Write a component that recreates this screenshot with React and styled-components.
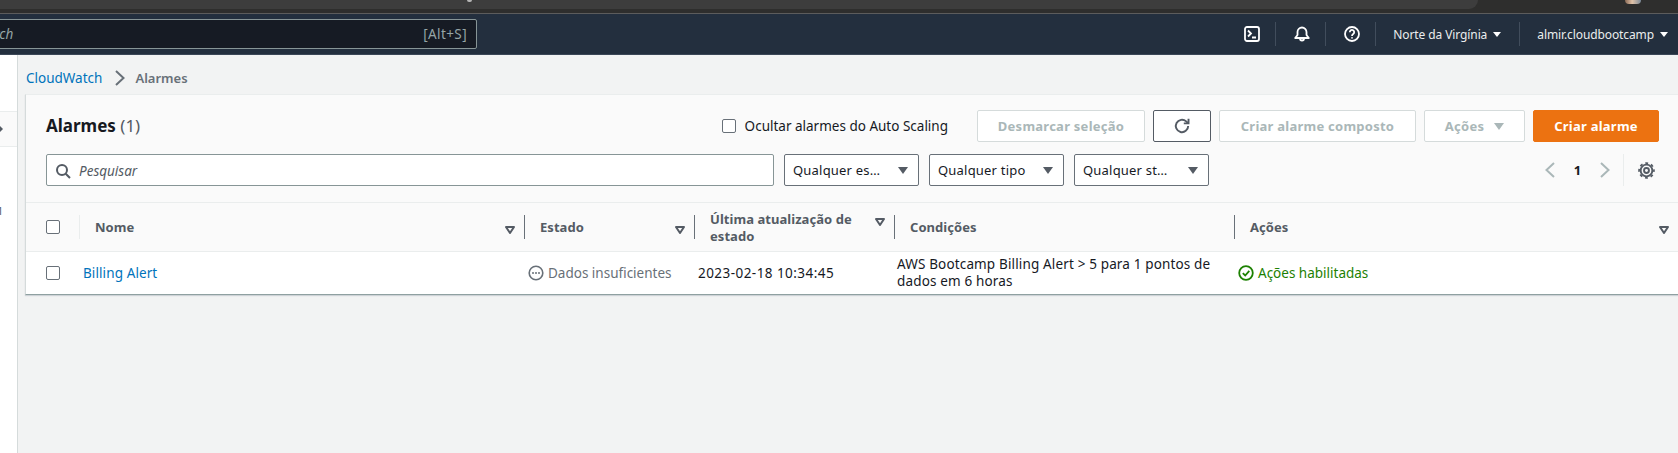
import React from 'react';
import styled, { createGlobalStyle } from 'styled-components';

const GlobalStyle = createGlobalStyle`
  html, body {
    margin: 0;
    padding: 0;
    height: 100%;
    overflow: hidden;
    background: #f2f3f3;
    font-family: "Noto Sans", sans-serif;
    font-size: 13.5px;
    color: #16191f;
  }
  #root { height: 100%; }
`;

const Page = styled.div`
  width: 1678px;
  height: 453px;
  display: flex;
  flex-direction: column;
  overflow: hidden;
`;

const BrowserStrip = styled.div`
  height: 13px;
  flex: none;
  display: flex;
  align-items: flex-start;
  background: #2e2e2d;
  border-bottom: 1px solid #5c5c5c;
`;

const AddressBar = styled.div`
  width: 1478px;
  height: 9px;
  display: flex;
  justify-content: center;
  background: #3d3d3d;
  border-bottom-right-radius: 9px;
`;

const TabText = styled.span`
  width: 5px;
  height: 2px;
  margin-right: 540px;
  background: #b5b5b5;
  border-radius: 0 0 3px 3px;
`;

const Avatar = styled.span`
  width: 16px;
  height: 4px;
  margin-left: 147px;
  border-radius: 0 0 8px 8px;
  background: linear-gradient(90deg, #8a6a55, #e0c2a8 45%, #7b8a99);
`;

const TopNav = styled.header`
  height: 40px;
  flex: none;
  display: flex;
  align-items: center;
  background: #232f3e;
  border-bottom: 1px solid #3b4757;
`;

const GlobalSearch = styled.div`
  width: 509px;
  height: 30px;
  margin-left: -32px;
  padding: 0 9px 0 32px;
  box-sizing: border-box;
  display: flex;
  align-items: center;
  justify-content: space-between;
  background: #161b24;
  border: 1px solid #879596;
  border-radius: 2px;
  color: #95a5a6;
`;

const SearchHint = styled.span`
  font-style: italic;
  margin-left: -28px;
`;

const ShortcutHint = styled.span`
  letter-spacing: 0.4px;
`;

const NavRight = styled.div`
  margin-left: auto;
  display: flex;
  align-items: center;
  height: 100%;
  padding-right: 10px;
`;

const NavIcon = styled.div`
  width: 50px;
  height: 24px;
  box-sizing: border-box;
  padding-left: 2px;
  display: flex;
  align-items: center;
  justify-content: center;
  color: #fff;
  border-right: 1px solid #414d5c;
`;

const NavMenu = styled.div`
  display: flex;
  align-items: center;
  gap: 6px;
  height: 24px;
  padding-left: 17px;
  padding-right: ${p => p.$right}px;
  color: #eaeded;
  font-size: 12px;
  letter-spacing: -0.1px;
  white-space: nowrap;
  border-right: ${p => (p.$last ? 'none' : '1px solid #414d5c')};
`;

const Caret = styled.span`
  width: 0;
  height: 0;
  border-left: ${p => p.$size}px solid transparent;
  border-right: ${p => p.$size}px solid transparent;
  border-top: ${p => p.$size * 1.4}px solid ${p => p.$color};
  flex: none;
`;

const Body = styled.div`
  flex: 1;
  display: flex;
  min-height: 0;
`;

const Sidebar = styled.aside`
  width: 17px;
  flex: none;
  background: #fff;
  border-right: 1px solid #d5dbdb;
  display: flex;
  flex-direction: column;
  padding-top: 56px;
  color: #545b64;
  font-size: 11px;
`;

const SideRow = styled.div`
  height: 36px;
  box-sizing: border-box;
  background: #fafafa;
  border-top: 1px solid #eaeded;
  border-bottom: 1px solid #eaeded;
  display: flex;
  align-items: center;
  margin-bottom: 57px;
`;

const SideArrow = styled.span`
  width: 0;
  height: 0;
  border-top: 3px solid transparent;
  border-bottom: 3px solid transparent;
  border-left: 3px solid #545b64;
`;

const SideCount = styled.div`
  margin-left: -3px;
  line-height: 14px;
`;

const Main = styled.main`
  flex: 1;
  min-width: 0;
  padding-left: 7px;
`;

const Breadcrumbs = styled.nav`
  height: 39px;
  box-sizing: border-box;
  padding: 6px 0 0 1px;
  display: flex;
  align-items: center;
`;

const CrumbLink = styled.a`
  color: #0073bb;
`;

const CrumbCurrent = styled.span`
  color: #687078;
  font-size: 13px;
  font-weight: 600;
`;

const CrumbArrow = styled.span`
  display: flex;
  margin: 0 7px 0 10px;
  color: #687078;
`;

const Card = styled.section`
  background: #fff;
  border-top: 1px solid #eaeded;
  border-left: 1px solid #d5dbdb;
  border-bottom: 1px solid #8fa0a1;
  box-shadow: 0 1px 1px rgba(0, 31, 63, 0.15);
`;

const CardHeader = styled.div`
  background: #fafafa;
  height: 108px;
  box-sizing: border-box;
  padding: 15px 19px 0 20px;
  border-bottom: 1px solid #eaeded;
  display: flex;
  flex-direction: column;
  gap: 12px;
`;

const HeaderRow = styled.div`
  display: flex;
  align-items: center;
  height: 32px;
  flex: none;
`;

const Title = styled.h1`
  margin: 0 0 2px;
  font-size: 17px;
  font-weight: 700;
  color: #16191f;
`;

const TitleCount = styled.span`
  font-weight: 400;
  color: #545b64;
`;

const HideLabel = styled.label`
  margin-left: auto;
  margin-right: 21px;
  display: flex;
  align-items: center;
  gap: 9px;
  color: #16191f;
`;

const Check = styled.span`
  display: block;
  flex: none;
  width: 12px;
  height: 12px;
  margin-bottom: ${p => (p.$lift ? 2 : 0)}px;
  background: #fff;
  border: 1px solid #687078;
  border-radius: 2px;
`;

const Button = styled.button`
  height: 32px;
  box-sizing: border-box;
  margin-left: 8px;
  width: ${p => p.$width}px;
  flex: none;
  display: flex;
  align-items: center;
  justify-content: center;
  gap: 10px;
  padding: 0;
  font-family: inherit;
  font-size: 13px;
  font-weight: 700;
  letter-spacing: 0.25px;
  border-radius: 2px;
  border: 1px solid ${p => (p.$primary ? '#ec7211' : p.$active ? '#545b64' : '#d5dbdb')};
  background: ${p => (p.$primary ? '#ec7211' : '#fff')};
  color: ${p => (p.$primary ? '#fff' : p.$active ? '#545b64' : '#aab7b8')};
`;

const SearchField = styled.div`
  width: 728px;
  height: 32px;
  box-sizing: border-box;
  display: flex;
  align-items: center;
  gap: 8px;
  padding: 1px 0 0 8px;
  background: #fff;
  border: 1px solid #879596;
  border-radius: 2px;
  color: #545b64;
  font-style: italic;
  flex: none;
`;

const SearchIcon = styled.span`
  display: flex;
  color: #545b64;
`;

const Select = styled.div`
  width: 135px;
  height: 32px;
  box-sizing: border-box;
  flex: none;
  margin-left: 10px;
  display: flex;
  align-items: center;
  justify-content: space-between;
  padding: 0 10px 0 8px;
  background: #fff;
  border: 1px solid #687078;
  border-radius: 2px;
  font-size: 13px;
  letter-spacing: 0.2px;
  color: #16191f;
`;

const Pagination = styled.div`
  margin-left: auto;
  display: flex;
  align-items: center;
  height: 32px;
  margin-right: 4px;
`;

const PageArrow = styled.span`
  display: flex;
  color: #aab7b8;
`;

const PageNumber = styled.span`
  font-size: 13px;
  font-weight: 700;
  width: 39px;
  text-align: center;
  color: #16191f;
`;

const PageDivider = styled.span`
  width: 1px;
  height: 32px;
  margin: 0 14px 0 10px;
  background: #eaeded;
`;

const GearWrap = styled.span`
  display: flex;
  color: #545b64;
`;

const Grid = styled.div`
  display: grid;
  grid-template-columns: 54px 445px 170px 200px 340px 1fr;
`;

const HeadCell = styled.div`
  height: 49px;
  box-sizing: border-box;
  background: #fafafa;
  border-bottom: 1px solid #eaeded;
  display: flex;
  align-items: center;
  justify-content: space-between;
  padding: 1px ${p => p.$right ?? 10}px 0 ${p => p.$left ?? 15}px;
  position: relative;
  color: #545b64;
  font-size: 13px;
  font-weight: 700;
  letter-spacing: 0.05px;
  line-height: 17px;
  &::after {
    content: '';
    position: absolute;
    right: 0;
    top: 12px;
    height: 24px;
    width: 1px;
    background: ${p => (p.$sep === 'light' ? '#eaeded' : p.$sep === 'none' ? 'transparent' : '#687078')};
  }
`;

const SortMark = styled.span`
  display: flex;
  flex: none;
  color: #545b64;
  align-self: ${p => (p.$top ? 'flex-start' : 'center')};
  margin-top: ${p => (p.$top ? '14px' : '4px')};
`;

const Cell = styled.div`
  height: 42px;
  box-sizing: border-box;
  background: #fff;
  display: flex;
  align-items: center;
  padding-left: ${p => p.$left ?? 3}px;
  padding-right: 4px;
  line-height: 17px;
  letter-spacing: ${p => p.$track ?? 0}px;
  color: ${p => p.$color || '#16191f'};
  gap: ${p => p.$gap ?? 0}px;
`;

const RowLink = styled.a`
  color: #0073bb;
`;

const SortIcon = ({ top }) => (
  <SortMark $top={top}>
    <svg width="10" height="8" viewBox="0 0 10 8">
      <path d="M1 1h8L5 7z" fill="none" stroke="currentColor" strokeWidth="2" strokeLinejoin="round" />
    </svg>
  </SortMark>
);

const Chevron = ({ dir }) => (
  <svg width="16" height="16" viewBox="0 0 16 16" fill="none" stroke="currentColor" strokeWidth="2">
    <path d={dir === 'left' ? 'M12 1 4.500 8l7.500 7' : 'M4 1l7.500 7L4 15'} />
  </svg>
);

export default function App() {
  return (
    <Page>
      <GlobalStyle />
      <BrowserStrip>
        <AddressBar>
          <TabText />
        </AddressBar>
        <Avatar />
      </BrowserStrip>
      <TopNav>
        <GlobalSearch>
          <SearchHint>Search</SearchHint>
          <ShortcutHint>[Alt+S]</ShortcutHint>
        </GlobalSearch>
        <NavRight>
          <NavIcon>
            <svg width="16" height="16" viewBox="0 0 16 16" fill="none" stroke="currentColor" strokeWidth="1.8">
              <rect x="1" y="1" width="14" height="14" rx="2" />
              <path d="M4 4.500 7 7.500 4 10.500M8 11.500h4" />
            </svg>
          </NavIcon>
          <NavIcon>
            <svg width="16" height="16" viewBox="0 0 16 16" fill="none" stroke="currentColor" strokeWidth="1.8">
              <path d="M1.200 12h13.600L12.500 9V6a4.500 4.500 0 0 0-9 0v3zM6 12.500a2 2 0 0 0 4 0" strokeLinejoin="round" />
            </svg>
          </NavIcon>
          <NavIcon>
            <svg width="16" height="16" viewBox="0 0 16 16" fill="none" stroke="currentColor" strokeWidth="1.8">
              <circle cx="8" cy="8" r="7" />
              <path d="M5.800 6.200a2.200 2.200 0 1 1 3.400 1.800C8.400 8.500 8 9 8 10" />
              <path d="M8 11.200v1.400" />
            </svg>
          </NavIcon>
          <NavMenu $right={18}>
            Norte da Virgínia <Caret $size={4} $color="#fff" />
          </NavMenu>
          <NavMenu $right={0} $last>
            almir.cloudbootcamp <Caret $size={4} $color="#fff" />
          </NavMenu>
        </NavRight>
      </TopNav>
      <Body>
        <Sidebar>
          <SideRow>
            <SideArrow />
          </SideRow>
          <SideCount>1</SideCount>
        </Sidebar>
        <Main>
          <Breadcrumbs>
            <CrumbLink>CloudWatch</CrumbLink>
            <CrumbArrow><Chevron dir="right" /></CrumbArrow>
            <CrumbCurrent>Alarmes</CrumbCurrent>
          </Breadcrumbs>
          <Card>
            <CardHeader>
              <HeaderRow>
                <Title>Alarmes <TitleCount>(1)</TitleCount></Title>
                <HideLabel><Check />Ocultar alarmes do Auto Scaling</HideLabel>
                <Button $width={168}>Desmarcar seleção</Button>
                <Button $width={58} $active>
                  <svg width="18" height="18" viewBox="0 0 16 16" fill="none" stroke="currentColor" strokeWidth="1.7">
                    <path d="M13.500 8a5.500 5.500 0 1 1-1.800-4.100L13.500 5.500" />
                    <path d="M13.800 1.500v4.200H9.600" />
                  </svg>
                </Button>
                <Button $width={197}>Criar alarme composto</Button>
                <Button $width={101}>Ações <Caret $size={5.5} $color="#aab7b8" /></Button>
                <Button $width={126} $primary>Criar alarme</Button>
              </HeaderRow>
              <HeaderRow>
                <SearchField>
                  <SearchIcon>
                    <svg width="16" height="16" viewBox="0 0 16 16" fill="none" stroke="currentColor" strokeWidth="2">
                      <circle cx="7" cy="7" r="5" />
                      <path d="M10.700 10.700 15 15" />
                    </svg>
                  </SearchIcon>
                  Pesquisar
                </SearchField>
                <Select>Qualquer es… <Caret $size={5.5} $color="#545b64" /></Select>
                <Select>Qualquer tipo <Caret $size={5.5} $color="#545b64" /></Select>
                <Select>Qualquer st… <Caret $size={5.5} $color="#545b64" /></Select>
                <Pagination>
                  <PageArrow><Chevron dir="left" /></PageArrow>
                  <PageNumber>1</PageNumber>
                  <PageArrow><Chevron dir="right" /></PageArrow>
                  <PageDivider />
                  <GearWrap>
                    <svg width="17" height="17" viewBox="0 0 16 16" fill="none" stroke="currentColor">
                      <circle cx="8" cy="8" r="2.300" strokeWidth="1.800" />
                      <circle cx="8" cy="8" r="5.500" strokeWidth="1.800" />
                      <circle cx="8" cy="8" r="7" strokeWidth="1.600" strokeDasharray="2.700 2.800" strokeDashoffset="1.350" />
                    </svg>
                  </GearWrap>
                </Pagination>
              </HeaderRow>
            </CardHeader>
            <Grid>
              <HeadCell $left={20} $right={0} $sep="light"><Check $lift /></HeadCell>
              <HeadCell>Nome<SortIcon /></HeadCell>
              <HeadCell>Estado<SortIcon /></HeadCell>
              <HeadCell>
                <span>Última atualização de estado</span>
                <SortIcon top />
              </HeadCell>
              <HeadCell>Condições</HeadCell>
              <HeadCell $sep="none" $right={9}>Ações<SortIcon /></HeadCell>

              <Cell $left={20}><Check /></Cell>
              <Cell $track={0.1}><RowLink>Billing Alert</RowLink></Cell>
              <Cell $color="#687078" $gap={4}>
                <svg width="16" height="16" viewBox="0 0 16 16" fill="none">
                  <circle cx="8" cy="8" r="6.800" stroke="#687078" strokeWidth="1.600" />
                  <circle cx="5" cy="8" r="1" fill="#687078" />
                  <circle cx="8" cy="8" r="1" fill="#687078" />
                  <circle cx="11" cy="8" r="1" fill="#687078" />
                </svg>
                Dados insuficientes
              </Cell>
              <Cell $left={3} $track={0.45}>2023-02-18 10:34:45</Cell>
              <Cell $left={2} $track={0.15}>AWS Bootcamp Billing Alert &gt; 5 para 1 pontos de dados em 6 horas</Cell>
              <Cell $color="#1d8102" $gap={4}>
                <svg width="16" height="16" viewBox="0 0 16 16" fill="none" stroke="#1d8102" strokeWidth="1.800">
                  <circle cx="8" cy="8" r="6.800" />
                  <path d="M4.800 8.200 7.200 10.500 11.300 5.800" />
                </svg>
                Ações habilitadas
              </Cell>
            </Grid>
          </Card>
        </Main>
      </Body>
    </Page>
  );
}
